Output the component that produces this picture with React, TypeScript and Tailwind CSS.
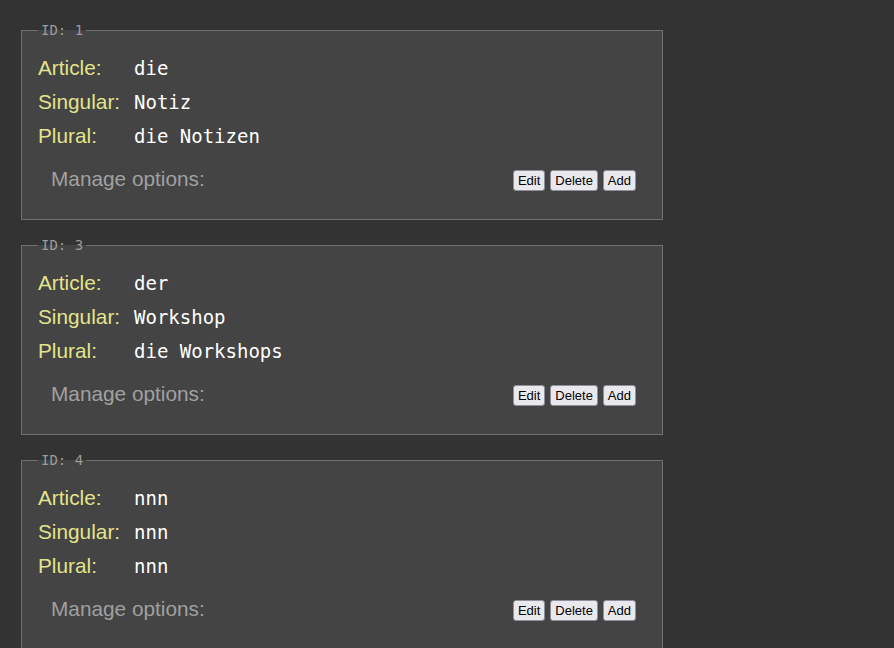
const nouns = [
  { id: 1, article: "die", singular: "Notiz", plural: "die Notizen" },
  { id: 3, article: "der", singular: "Workshop", plural: "die Workshops" },
  { id: 4, article: "nnn", singular: "nnn", plural: "nnn" },
];

const mono = "font-['DejaVu_Sans_Mono',monospace]";
const sans = "font-['Liberation_Sans',Arial,sans-serif]";

function Row({ label, value }: { label: string; value: string }) {
  return (
    <div className="flex items-center h-[34px]">
      <span className={`w-[96px] text-[20.8px] text-[#e3e38c] ${sans}`}>{label}</span>
      <span className={`text-[19px] text-white ${mono}`}>{value}</span>
    </div>
  );
}

function NounCard({ noun }: { noun: (typeof nouns)[number] }) {
  return (
    <fieldset className="w-[642px] border border-[#707070] bg-[#444444] pl-4 pr-[26px] pt-[12px] pb-[23px]">
      <legend className={`px-[3px] text-[14px] leading-[17px] text-[#9a9a9a] ${mono}`}>
        ID: {noun.id}
      </legend>
      <Row label="Article:" value={noun.article} />
      <Row label="Singular:" value={noun.singular} />
      <Row label="Plural:" value={noun.plural} />
      <div className="flex items-center justify-between h-[34px] mt-[9px] pl-[13px]">
        <span className={`text-[20.8px] text-[#a0a0a0] ${sans}`}>Manage options:</span>
        <div className={`flex gap-[5px] mt-[3px] text-[13px] ${sans}`}>
          {["Edit", "Delete", "Add"].map((b) => (
            <button
              key={b}
              className="h-[21px] px-[4px] bg-[#e9e9ed] text-black border border-[#8f8f9d] rounded-[3px] leading-none"
            >
              {b}
            </button>
          ))}
        </div>
      </div>
    </fieldset>
  );
}

export default function App() {
  return (
    <div className="min-h-screen bg-[#333333] pl-[21px] pt-[22px] flex flex-col gap-[17px] overflow-hidden h-[648px]">
      {nouns.map((n) => (
        <NounCard key={n.id} noun={n} />
      ))}
    </div>
  );
}
